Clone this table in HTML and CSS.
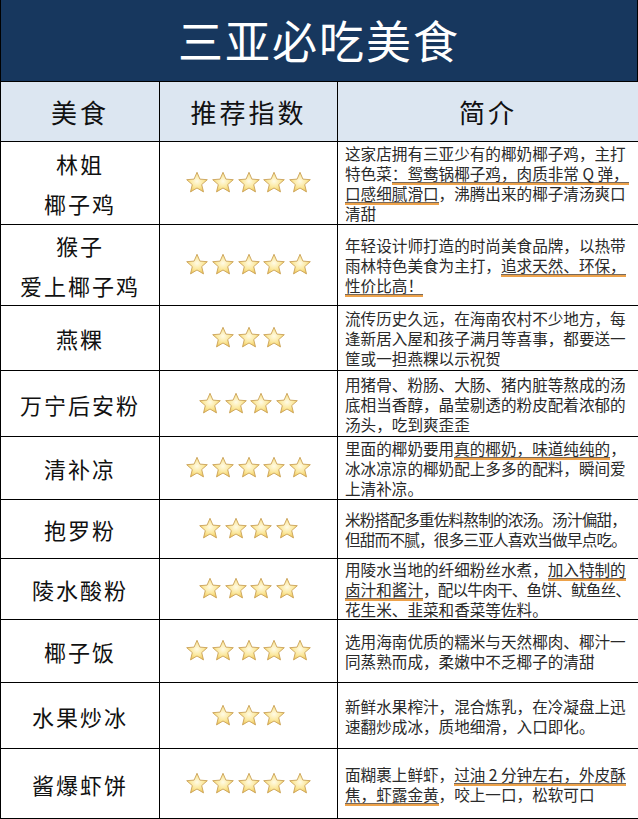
FILE: index.html
```html
<!DOCTYPE html>
<html lang="zh-CN">
<head>
<meta charset="utf-8">
<title>三亚必吃美食</title>
<link rel="stylesheet" href="styles.css">
</head>
<body>
<svg class="defs" width="0" height="0" aria-hidden="true">
  <defs>
    <radialGradient id="starfill" cx="50%" cy="45%" r="60%">
      <stop offset="0%" stop-color="#fffbe6"/>
      <stop offset="55%" stop-color="#fbe79a"/>
      <stop offset="100%" stop-color="#eec24e"/>
    </radialGradient>
    <symbol id="star" viewBox="0 0 24 24">
      <path d="M12 1.3 L14.9 8.1 L22.3 8.7 L16.7 13.6 L18.5 20.9 L12 17 L5.5 20.9 L7.3 13.6 L1.7 8.7 L9.1 8.1Z" fill="url(#starfill)" stroke="#caa258" stroke-width="0.9" stroke-linejoin="round"/>
    </symbol>
  </defs>
</svg>
<div class="page">
  <div class="title">三亚必吃美食</div>
  <table class="food">
    <colgroup><col class="c1"><col class="c2"><col class="c3"></colgroup>
    <thead>
      <tr class="head"><th>美食</th><th>推荐指数</th><th>简介</th></tr>
    </thead>
    <tbody>
      <tr class="r1">
        <td class="name two">林姐<br>椰子鸡</td>
        <td class="stars"><svg><use href="#star"/></svg><svg><use href="#star"/></svg><svg><use href="#star"/></svg><svg><use href="#star"/></svg><svg><use href="#star"/></svg></td>
        <td class="desc">这家店拥有三亚少有的椰奶椰子鸡，主打<br>特色菜<span class="ul">：鸳鸯锅椰子鸡，肉质非常 Q 弹，<br>口感细腻滑口</span>，沸腾出来的椰子清汤爽口<br>清甜</td>
      </tr>
      <tr class="r2">
        <td class="name two">猴子<br>爱上椰子鸡</td>
        <td class="stars"><svg><use href="#star"/></svg><svg><use href="#star"/></svg><svg><use href="#star"/></svg><svg><use href="#star"/></svg><svg><use href="#star"/></svg></td>
        <td class="desc">年轻设计师打造的时尚美食品牌，以热带<br>雨林特色美食为主打，<span class="ul">追求天然、环保，<br>性价比高！</span></td>
      </tr>
      <tr class="r3">
        <td class="name">燕粿</td>
        <td class="stars"><svg><use href="#star"/></svg><svg><use href="#star"/></svg><svg><use href="#star"/></svg></td>
        <td class="desc">流传历史久远，在海南农村不少地方，每<br>逢新居入屋和孩子满月等喜事，都要送一<br>筐或一担燕粿以示祝贺</td>
      </tr>
      <tr class="r4">
        <td class="name">万宁后安粉</td>
        <td class="stars"><svg><use href="#star"/></svg><svg><use href="#star"/></svg><svg><use href="#star"/></svg><svg><use href="#star"/></svg></td>
        <td class="desc">用猪骨、粉肠、大肠、猪内脏等熬成的汤<br>底相当香醇，晶莹剔透的粉皮配着浓郁的<br>汤头，吃到爽歪歪</td>
      </tr>
      <tr class="r5">
        <td class="name">清补凉</td>
        <td class="stars"><svg><use href="#star"/></svg><svg><use href="#star"/></svg><svg><use href="#star"/></svg><svg><use href="#star"/></svg><svg><use href="#star"/></svg></td>
        <td class="desc">里面的椰奶要用<span class="ul">真的椰奶，味道纯纯的</span>，<br>冰冰凉凉的椰奶配上多多的配料，瞬间爱<br>上清补凉。</td>
      </tr>
      <tr class="r6">
        <td class="name">抱罗粉</td>
        <td class="stars"><svg><use href="#star"/></svg><svg><use href="#star"/></svg><svg><use href="#star"/></svg><svg><use href="#star"/></svg></td>
        <td class="desc"><span class="tight">米粉搭配多重佐料熬制的浓汤。汤汁偏甜，</span><br><span class="tight">但甜而不腻，很多三亚人喜欢当做早点吃。</span></td>
      </tr>
      <tr class="r7">
        <td class="name">陵水酸粉</td>
        <td class="stars"><svg><use href="#star"/></svg><svg><use href="#star"/></svg><svg><use href="#star"/></svg><svg><use href="#star"/></svg></td>
        <td class="desc">用陵水当地的纤细粉丝水煮，<span class="ul">加入特制的<br>卤汁和酱汁</span><span class="tight">，配以牛肉干、鱼饼、鱿鱼丝、</span><br>花生米、韭菜和香菜等佐料。</td>
      </tr>
      <tr class="r8">
        <td class="name">椰子饭</td>
        <td class="stars"><svg><use href="#star"/></svg><svg><use href="#star"/></svg><svg><use href="#star"/></svg><svg><use href="#star"/></svg><svg><use href="#star"/></svg></td>
        <td class="desc">选用海南优质的糯米与天然椰肉、椰汁一<br>同蒸熟而成，柔嫩中不乏椰子的清甜</td>
      </tr>
      <tr class="r9">
        <td class="name">水果炒冰</td>
        <td class="stars"><svg><use href="#star"/></svg><svg><use href="#star"/></svg><svg><use href="#star"/></svg></td>
        <td class="desc">新鲜水果榨汁，混合炼乳，在冷凝盘上迅<br>速翻炒成冰，质地细滑，入口即化。</td>
      </tr>
      <tr class="r10">
        <td class="name">酱爆虾饼</td>
        <td class="stars"><svg><use href="#star"/></svg><svg><use href="#star"/></svg><svg><use href="#star"/></svg><svg><use href="#star"/></svg><svg><use href="#star"/></svg></td>
        <td class="desc">面糊裹上鲜虾，<span class="ul">过油 2 分钟左右，外皮酥<br>焦，虾露金黄</span>，咬上一口，松软可口</td>
      </tr>
    </tbody>
  </table>
</div>
</body>
</html>
```

FILE: styles.css
```css
html, body {
  margin: 0;
  padding: 0;
  background: #ffffff;
}

body {
  font-family: "Noto Sans CJK SC", "Noto Sans", sans-serif;
  color: #111;
}

.defs {
  position: absolute;
  width: 0;
  height: 0;
  overflow: hidden;
}

.page {
  width: 638px;
  box-sizing: border-box;
}

.title {
  height: 81px;
  box-sizing: border-box;
  background: #17375e;
  color: #ffffff;
  border-left: 1px solid #000;
  border-right: 1px solid #000;
  display: flex;
  align-items: center;
  justify-content: center;
  font-size: 45px;
  letter-spacing: 2px;
  line-height: 1;
  padding-bottom: 2px;
}

.food {
  width: 638px;
  border-collapse: collapse;
  table-layout: fixed;
}

.c1 { width: 159px; }
.c2 { width: 178px; }
.c3 { width: 301px; }

.food th,
.food td {
  border: 1px solid #000;
  padding: 0;
  vertical-align: middle;
}

.head th {
  height: 59px;
  background: #dce6f1;
  font-weight: 400;
  font-size: 26px;
  letter-spacing: 3px;
  color: #111;
  text-align: center;
}

.name {
  text-align: center;
  font-size: 22px;
  letter-spacing: 2px;
  line-height: 30px;
  color: #111;
}

.name.two {
  line-height: 40px;
}

.stars {
  text-align: center;
  font-size: 0;
  line-height: 0;
}

.stars svg {
  width: 24px;
  height: 24px;
  margin: 0 0.8px;
  vertical-align: middle;
}

.desc {
  font-size: 15.6px;
  line-height: 20px;
  color: #2a2a2a;
  padding: 0 4px 0 7px !important;
  white-space: nowrap;
  text-align: left;
}

.tight {
  letter-spacing: -0.8px;
}

.ul {
  background-image: linear-gradient(#7a6a5a, #7a6a5a), linear-gradient(#eda24a, #eda24a);
  background-size: 100% 1px, 100% 2px;
  background-position: 0 calc(100% - 2px), 0 100%;
  background-repeat: no-repeat;
  padding-bottom: 1px;
}

.r1 { height: 83px; }
.r2 { height: 81px; }
.r3 { height: 65px; }
.r4 { height: 66px; }
.r5 { height: 63px; }
.r6 { height: 59px; }
.r7 { height: 61px; }
.r8 { height: 63px; }
.r9 { height: 66px; }
.r10 { height: 70px; }
```
